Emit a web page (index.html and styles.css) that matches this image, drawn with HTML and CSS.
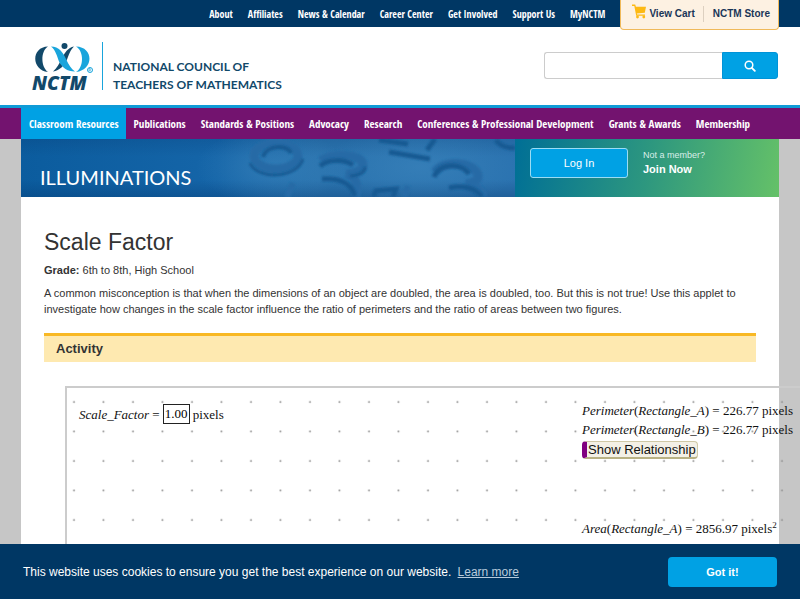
FILE: index.html
```html
<!DOCTYPE html>
<html lang="en">
<head>
    <meta charset="UTF-8">
    <meta name="viewport" content="width=device-width, initial-scale=1.0">
    <title>Scale Factor - National Council of Teachers of Mathematics</title>
    <link rel="stylesheet" href="styles.css">
</head>
<body>
    <div class="topbar">
        <nav class="top-links">
            <a href="#">About</a>
            <a href="#">Affiliates</a>
            <a href="#">News &amp; Calendar</a>
            <a href="#">Career Center</a>
            <a href="#">Get Involved</a>
            <a href="#">Support Us</a>
            <a href="#">MyNCTM</a>
        </nav>
        <div class="store">
            <a href="#" class="cart">
                <svg class="cart-icon" viewBox="0 0 15 15" width="15" height="15">
                    <path d="M0 .5h3.200l.7 2.300H14l-1.200 6-8 .8.3 1H13v1.100H4.200L2.300 2H0z" fill="#fdb913"/>
                    <circle cx="5.500" cy="13" r="1.400" fill="#fdb913"/>
                    <circle cx="11.800" cy="13" r="1.400" fill="#fdb913"/>
                </svg>
                View Cart
            </a>
            <a href="#" class="store-link">NCTM Store</a>
        </div>
    </div>

    <header class="header">
        <a href="#" class="logo">
            <span class="logo-mark">
                <svg viewBox="0 0 62 31" width="62" height="31">
                    <path d="M16 4.500C-1 5-1 28 16 30 8.500 25 8.500 9 16 4.500z" fill="#12496a"/>
                    <path d="M44 4.500C62 5 62 28 44 30c8-5 8-21 0-25.500z" fill="#19a5dc"/>
                    <path d="M42 4.500c-6 1-9 6-12 11.500-3 6-5 10-9 13.500 7-1 11-6 14-12 2-5 3-9 7-13z" fill="#12496a"/>
                    <path d="M19 4.500c8 0 12 6 15 12.500 3 6 5 10 9 12.500-8 0-13-4-16-10-2-5-3-11-8-15z" fill="#19a5dc"/>
                    <circle cx="32.500" cy="4" r="3" fill="#12496a"/>
                    <circle cx="58" cy="28" r="2.500" fill="none" stroke="#19a5dc"/>
                    <path d="M57 29.500v-3h1.200q1 .8 0 1.600H57m1 0 1 1.400" fill="none" stroke="#19a5dc" stroke-width=".6"/>
                </svg>
                <span class="logo-name">NCTM</span>
            </span>
            <span class="logo-text">NATIONAL COUNCIL OF<br>TEACHERS OF MATHEMATICS</span>
        </a>
        <form class="search">
            <input type="text" aria-label="Search">
            <button type="button" aria-label="Search">
                <svg viewBox="0 0 12 12" width="12" height="12">
                    <circle cx="5" cy="5" r="3.800" fill="none" stroke="#fff" stroke-width="1.500"/>
                    <path d="M7.800 7.800l3 3" stroke="#fff" stroke-width="1.900" stroke-linecap="round"/>
                </svg>
            </button>
        </form>
    </header>

    <nav class="main-nav">
        <a href="#" class="active">Classroom Resources</a>
        <a href="#">Publications</a>
        <a href="#">Standards &amp; Positions</a>
        <a href="#">Advocacy</a>
        <a href="#">Research</a>
        <a href="#">Conferences &amp; Professional Development</a>
        <a href="#">Grants &amp; Awards</a>
        <a href="#">Membership</a>
    </nav>

    <main class="container">
        <section class="banner">
            <div class="banner-title">
                <svg class="banner-art" viewBox="0 0 494 58" preserveAspectRatio="xMaxYMid slice">
                    <defs>
                        <filter id="soft"><feGaussianBlur stdDeviation="0.8"/></filter>
                        <radialGradient id="haze">
                            <stop offset="0" stop-color="#3f88bf" stop-opacity=".5"/>
                            <stop offset="1" stop-color="#3f88bf" stop-opacity="0"/>
                        </radialGradient>
                    </defs>
                    <ellipse cx="250" cy="28" rx="75" ry="38" fill="url(#haze)"/>
                    <ellipse cx="400" cy="28" rx="100" ry="40" fill="url(#haze)"/>
                    <!-- top faces of the numerals -->
                    <g filter="url(#soft)" fill="none" stroke="#276ba6" stroke-width="9">
                        <ellipse cx="255" cy="17" rx="22" ry="13"/>
                        <path d="M300 22c10-8 40-8 42 3 1 7-10 10-17 10 8 2 13 8 10 23"/>
                        <path d="M414 33c8-13 40-10 43 3 1 6-5 8-12 9 10 2 15 6 17 13"/>
                        <path d="M272 44l-6 14M387 47l-4 11" stroke-width="6"/>
                    </g>
                    <!-- shaded edges -->
                    <g filter="url(#soft)" fill="none" stroke="#195a93" stroke-width="5">
                        <path d="M242 18c3-12 24-13 28-4" stroke-width="4"/>
                        <path d="M229 24c6 16 46 17 53-4" stroke-width="3"/>
                        <path d="M299 27c8-7 24-7 33-1"/>
                        <path d="M344 28c0 6-8 9-15 9" stroke-width="3"/>
                        <path d="M301 40c15-1 29 3 33 17"/>
                        <path d="M358 1l29 4M368 13l41 7M414 0l-8 11"/>
                        <path d="M413 38c6-15 28-14 35-3"/>
                        <path d="M428 49c14-3 27 0 33 9"/>
                        <path d="M353 52l22-2-3 8M353 58l1-6"/>
                        <path d="M475 1q5 8 19 8"/>
                    </g>
                </svg>
                <span class="banner-name">ILLUMINATIONS</span>
            </div>
            <div class="banner-login">
                <button type="button" class="login">Log In</button>
                <div class="join">
                    <span>Not a member?</span>
                    <a href="#">Join Now</a>
                </div>
            </div>
        </section>

        <article class="content">
            <h1>Scale Factor</h1>
            <p><strong>Grade:</strong> 6th to 8th, High School</p>
            <p>A common misconception is that when the dimensions of an object are doubled, the area is doubled, too. But this is not true! Use this applet to investigate how changes in the scale factor influence the ratio of perimeters and the ratio of areas between two figures.</p>
            <h2>Activity</h2>

            <div class="applet">
                <svg class="dots" width="100%" height="100%">
                    <defs>
                        <pattern id="grid" x="-8" y="-1" width="29.500" height="29.500" patternUnits="userSpaceOnUse">
                            <circle cx="15" cy="15" r="1" fill="#929292"/>
                        </pattern>
                    </defs>
                    <rect width="100%" height="100%" fill="url(#grid)"/>
                </svg>
                <div class="scale">
                    <label for="scale"><i>Scale_Factor</i> =</label>
                    <input type="text" id="scale" value="1.00">
                    <span>pixels</span>
                </div>
                <div class="measures">
                    <div><i>Perimeter</i>(<i>Rectangle_A</i>) = 226.77 pixels</div>
                    <div><i>Perimeter</i>(<i>Rectangle_B</i>) = 226.77 pixels</div>
                    <button type="button" class="show">Show Relationship</button>
                    <div class="area"><i>Area</i>(<i>Rectangle_A</i>) = 2856.97 pixels<sup>2</sup></div>
                </div>
            </div>
        </article>
    </main>

    <div class="cookies">
        <p>This website uses cookies to ensure you get the best experience on our website. <a href="#">Learn more</a></p>
        <button type="button">Got it!</button>
    </div>
</body>
</html>
```
FILE: styles.css
```css
* {
    margin: 0;
    padding: 0;
    box-sizing: border-box;
}

body {
    background: #c6c6c6;
    color: #333;
    font-family: "Liberation Sans", Arial, sans-serif;
    font-size: 11px;
    height: 100vh;
    overflow: hidden;
    display: flex;
    flex-direction: column;
}

a {
    color: inherit;
    text-decoration: none;
}

button,
input {
    font-family: inherit;
}

svg {
    display: block;
}

/* top bar */
.topbar {
    display: flex;
    justify-content: flex-end;
    align-items: flex-start;
    height: 27px;
    padding: 0 21px;
    background: #003764;
    flex-shrink: 0;
}

.top-links {
    display: flex;
    gap: 15px;
    padding-right: 15px;
    line-height: 28px;
    color: #fff;
    font-family: "Open Sans Condensed", "Liberation Sans Narrow", sans-serif;
    font-size: 10px;
    font-weight: 700;
    white-space: nowrap;
}

.store {
    display: flex;
    position: relative;
    z-index: 1;
    height: 30px;
    padding: 0 8px 0 11px;
    background: #fdf1e2;
    border: 1px solid #f0b95a;
    border-top: 0;
    border-radius: 0 0 4px 4px;
    color: #1a3557;
    font-size: 10px;
    font-weight: 700;
    line-height: 28px;
    white-space: nowrap;
}

.cart {
    display: flex;
    gap: 2px;
}

.cart-icon {
    margin-top: 4px;
}

.store-link {
    align-self: flex-start;
    margin: 6px 0 0 8px;
    padding-left: 9px;
    border-left: 1px solid #ddd0c0;
    line-height: 16px;
}

/* header */
.header {
    display: flex;
    justify-content: space-between;
    align-items: flex-start;
    height: 81px;
    padding: 15px 22px 0 32px;
    background: #fff;
    border-bottom: 3px solid #0f9bd7;
    flex-shrink: 0;
}

.logo {
    display: flex;
    color: #12496a;
}

.logo-mark {
    display: block;
    width: 71px;
    height: 48px;
    border-right: 1px solid #19a5dc;
}

.logo-name {
    display: block;
    font-family: "Open Sans", sans-serif;
    font-size: 19px;
    font-style: italic;
    font-weight: 800;
    line-height: 20px;
}

.logo-text {
    padding: 16px 0 0 10px;
    font-family: Lato, sans-serif;
    font-size: 12px;
    font-weight: 700;
    line-height: 18px;
    white-space: nowrap;
}

.search {
    display: flex;
    width: 234px;
    height: 27px;
    margin-top: 10px;
}

.search input {
    flex: 1;
    min-width: 0;
    padding: 0 8px;
    border: 1px solid #ccc;
    border-right: 0;
    border-radius: 3px 0 0 3px;
}

.search button {
    display: flex;
    align-items: center;
    justify-content: center;
    width: 56px;
    border: 1px solid #0093d8;
    border-radius: 0 3px 3px 0;
    background: #00a1e4;
}

/* main navigation */
.main-nav {
    display: flex;
    height: 31px;
    padding: 0 21px;
    background: #73136f;
    color: #fff;
    font-family: "Open Sans Condensed", "Liberation Sans Narrow", sans-serif;
    font-size: 11px;
    font-weight: 700;
    line-height: 31px;
    white-space: nowrap;
    flex-shrink: 0;
}

.main-nav a {
    padding: 0 7px 0 8px;
}

.main-nav .active {
    background: #00a1e4;
}

/* page */
.container {
    flex: 1;
    margin: 0 21px;
    background: #fff;
}

.banner {
    display: flex;
    height: 58px;
    color: #fff;
}

.banner-title {
    display: flex;
    align-items: flex-end;
    flex: 1;
    position: relative;
    padding: 0 19px 8px;
    background: linear-gradient(rgba(0, 40, 90, 0.15), transparent 30%, transparent 70%, rgba(0, 40, 90, 0.25)), linear-gradient(90deg, #0b5c9e, #1565a8 40%, #2a73ae 60%, #2b73b0);
}

.banner-art {
    position: absolute;
    inset: 0;
    width: 100%;
    height: 100%;
}

.banner-name {
    position: relative;
    font-family: Lato, sans-serif;
    font-size: 20px;
    line-height: 24px;
}

.banner-login {
    display: flex;
    width: 264px;
    padding: 9px 15px;
    gap: 15px;
    background: linear-gradient(100deg, #006f96, #2d977f 50%, #65c168);
}

.login {
    width: 98px;
    height: 30px;
    border: 1px solid #9bdcf4;
    border-radius: 3px;
    background: #00a1e4;
    color: #fff;
    font-size: 11px;
}

.join {
    display: flex;
    flex-direction: column;
    font-size: 9px;
    line-height: 14px;
    color: #d9eee9;
}

.join a {
    color: #fff;
    font-size: 11px;
    font-weight: 700;
}

.content {
    padding: 32px 23px 0;
}

h1 {
    margin-bottom: 7px;
    font-size: 23px;
    font-weight: 400;
    line-height: 26px;
}

.content p {
    margin-bottom: 7px;
    line-height: 16px;
}

h2 {
    margin-top: 16px;
    padding: 0 12px;
    border-top: 3px solid #f8b824;
    background: #fee9b0;
    font-size: 13px;
    line-height: 26px;
}

/* the applet keeps its own width and runs past the page column */
.applet {
    display: flex;
    justify-content: space-between;
    position: relative;
    width: 780px;
    height: 420px;
    margin: 24px 0 0 21px;
    padding: 13px 0 0 12px;
    border: 2px solid #ccc;
    color: #111;
    font-family: "Liberation Serif", "Times New Roman", serif;
    font-size: 13px;
    line-height: 19px;
}

.dots {
    position: absolute;
    inset: 0;
}

.scale,
.measures {
    position: relative;
}

.scale {
    display: flex;
    align-items: center;
    gap: 3px;
    height: 26px;
}

.scale input {
    width: 27px;
    height: 20px;
    border: 1px solid #222;
    background: #fff;
    font-size: 13px;
    text-align: center;
}

.measures {
    width: 261px;
}

.show {
    display: block;
    height: 18px;
    padding: 0 1px;
    margin-top: 2px;
    border: 1px solid #cfc8a6;
    border-bottom: 2px solid #b8b184;
    border-left: 5px solid #800080;
    border-radius: 4px;
    background: #f3f0e6;
    color: #111;
    font-family: "Liberation Sans", Arial, sans-serif;
    font-size: 13px;
    line-height: 14px;
}

.area {
    margin-top: 60px;
}

.area sup {
    font-size: 9px;
    line-height: 0;
}

/* cookie notice */
.cookies {
    display: flex;
    align-items: center;
    justify-content: space-between;
    position: fixed;
    right: 0;
    bottom: 0;
    left: 0;
    z-index: 2;
    height: 55px;
    padding: 0 23px;
    background: #003764;
    color: #fff;
    font-size: 12px;
}

.cookies a {
    margin-left: 3px;
    color: #b8cbdc;
    text-decoration: underline;
}

.cookies button {
    width: 109px;
    height: 30px;
    border: 0;
    border-radius: 4px;
    background: #00a1e4;
    color: #fff;
    font-size: 11px;
    font-weight: 700;
}
```
